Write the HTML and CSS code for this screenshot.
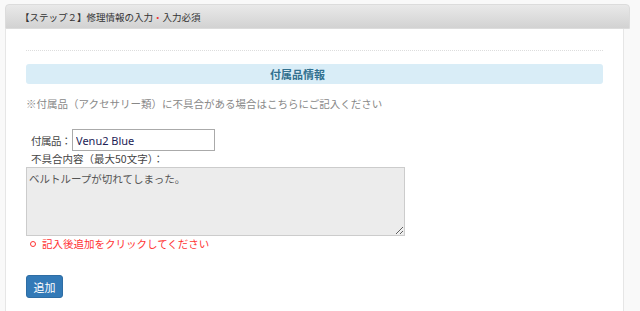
FILE: index.html
```html
<!DOCTYPE html>
<html lang="ja">
<head>
    <meta charset="UTF-8">
    <title>修理情報の入力</title>
    <link rel="stylesheet" href="styles.css">
</head>
<body>

    <div class="panel">
        <div class="panel-head">【ステップ２】修理情報の入力<span class="dot">・</span>入力必須</div>

        <div class="panel-body">
            <hr class="sep">

            <h3 class="section-title">付属品情報</h3>
            <p class="note">※付属品（アクセサリー類）に不具合がある場合はこちらにご記入ください</p>

            <div class="field-row">
                <label class="label" for="item">付属品：</label>
                <input type="text" id="item" class="text-input" value="Venu2 Blue">
            </div>
            <div class="label-line">不具合内容（最大50文字）：</div>
            <textarea class="area" readonly>ベルトループが切れてしまった。</textarea>

            <ul class="errors">
                <li>記入後追加をクリックしてください</li>
            </ul>

            <button class="btn">追加</button>
        </div>
    </div>

</body>
</html>
```

FILE: styles.css
```css
/* 基本 */
* {
    margin: 0;
    padding: 0;
    box-sizing: border-box;
}

body {
    background: #f9f9f9;
    font-family: "Noto Sans CJK JP", "Noto Sans", sans-serif;
    color: #333;
    font-size: 10.5px;
}

.panel {
    margin: 4px 10px 0 5px;
}

.panel-head {
    height: 25px;
    padding: 0 0 0 14px;
    line-height: 24px;
    font-size: 9.5px;
    color: #333;
    background: linear-gradient(#e9e9e9, #d2d2d2);
    border: 1px solid #dcdcdc;
    border-radius: 4px 4px 0 0;
}

.panel-head .dot {
    color: #e33;
}

.panel-body {
    width: 619px;
    height: 290px;
    padding: 21px 20px 0 20px;
    background: #fff;
    border-left: 1px solid #e6e6e6;
    border-right: 1px solid #e6e6e6;
}

.sep {
    border: none;
    border-top: 1px dotted #ddd;
}

.section-title {
    margin-top: 13px;
    height: 20px;
    padding-right: 34px;
    line-height: 20px;
    text-align: center;
    font-size: 11px;
    font-weight: bold;
    color: #31708f;
    background: #d9edf7;
    border-radius: 3px;
}

.note {
    margin-top: 10px;
    line-height: 20px;
    color: #888;
}

.field-row {
    margin-top: 15px;
    display: flex;
    align-items: center;
    padding-left: 5px;
}

.label {
    color: #444;
    width: 41px;
    white-space: nowrap;
    letter-spacing: -0.5px;
}

.text-input {
    width: 143px;
    height: 22px;
    padding: 0 3px;
    border: 1px solid #aaa;
    font-family: "Noto Sans", sans-serif;
    font-size: 11px;
    color: #222255;
}

.label-line {
    padding-left: 5px;
    line-height: 16px;
    color: #444;
}

.area {
    display: block;
    width: 379px;
    height: 69px;
    padding: 3px 2px;
    background: #ececec;
    border: 1px solid #ccc;
    font-family: "Noto Sans CJK JP", "Noto Sans", sans-serif;
    font-size: 10.5px;
    color: #555;
    resize: both;
}

.errors {
    margin-top: 1px;
    list-style: none;
    color: #f33;
}

.errors li {
    padding-left: 16px;
    line-height: 14px;
    position: relative;
}

.errors li::before {
    content: "";
    position: absolute;
    left: 4px;
    top: 4px;
    width: 4px;
    height: 4px;
    border: 1px solid #f33;
    border-radius: 50%;
}

.btn {
    margin-top: 24px;
    width: 37px;
    height: 23px;
    border: 1px solid #2e6da4;
    border-radius: 3px;
    background: #337ab7;
    color: #fff;
    font-family: "Noto Sans CJK JP", "Noto Sans", sans-serif;
    font-size: 11px;
    cursor: pointer;
}
```
